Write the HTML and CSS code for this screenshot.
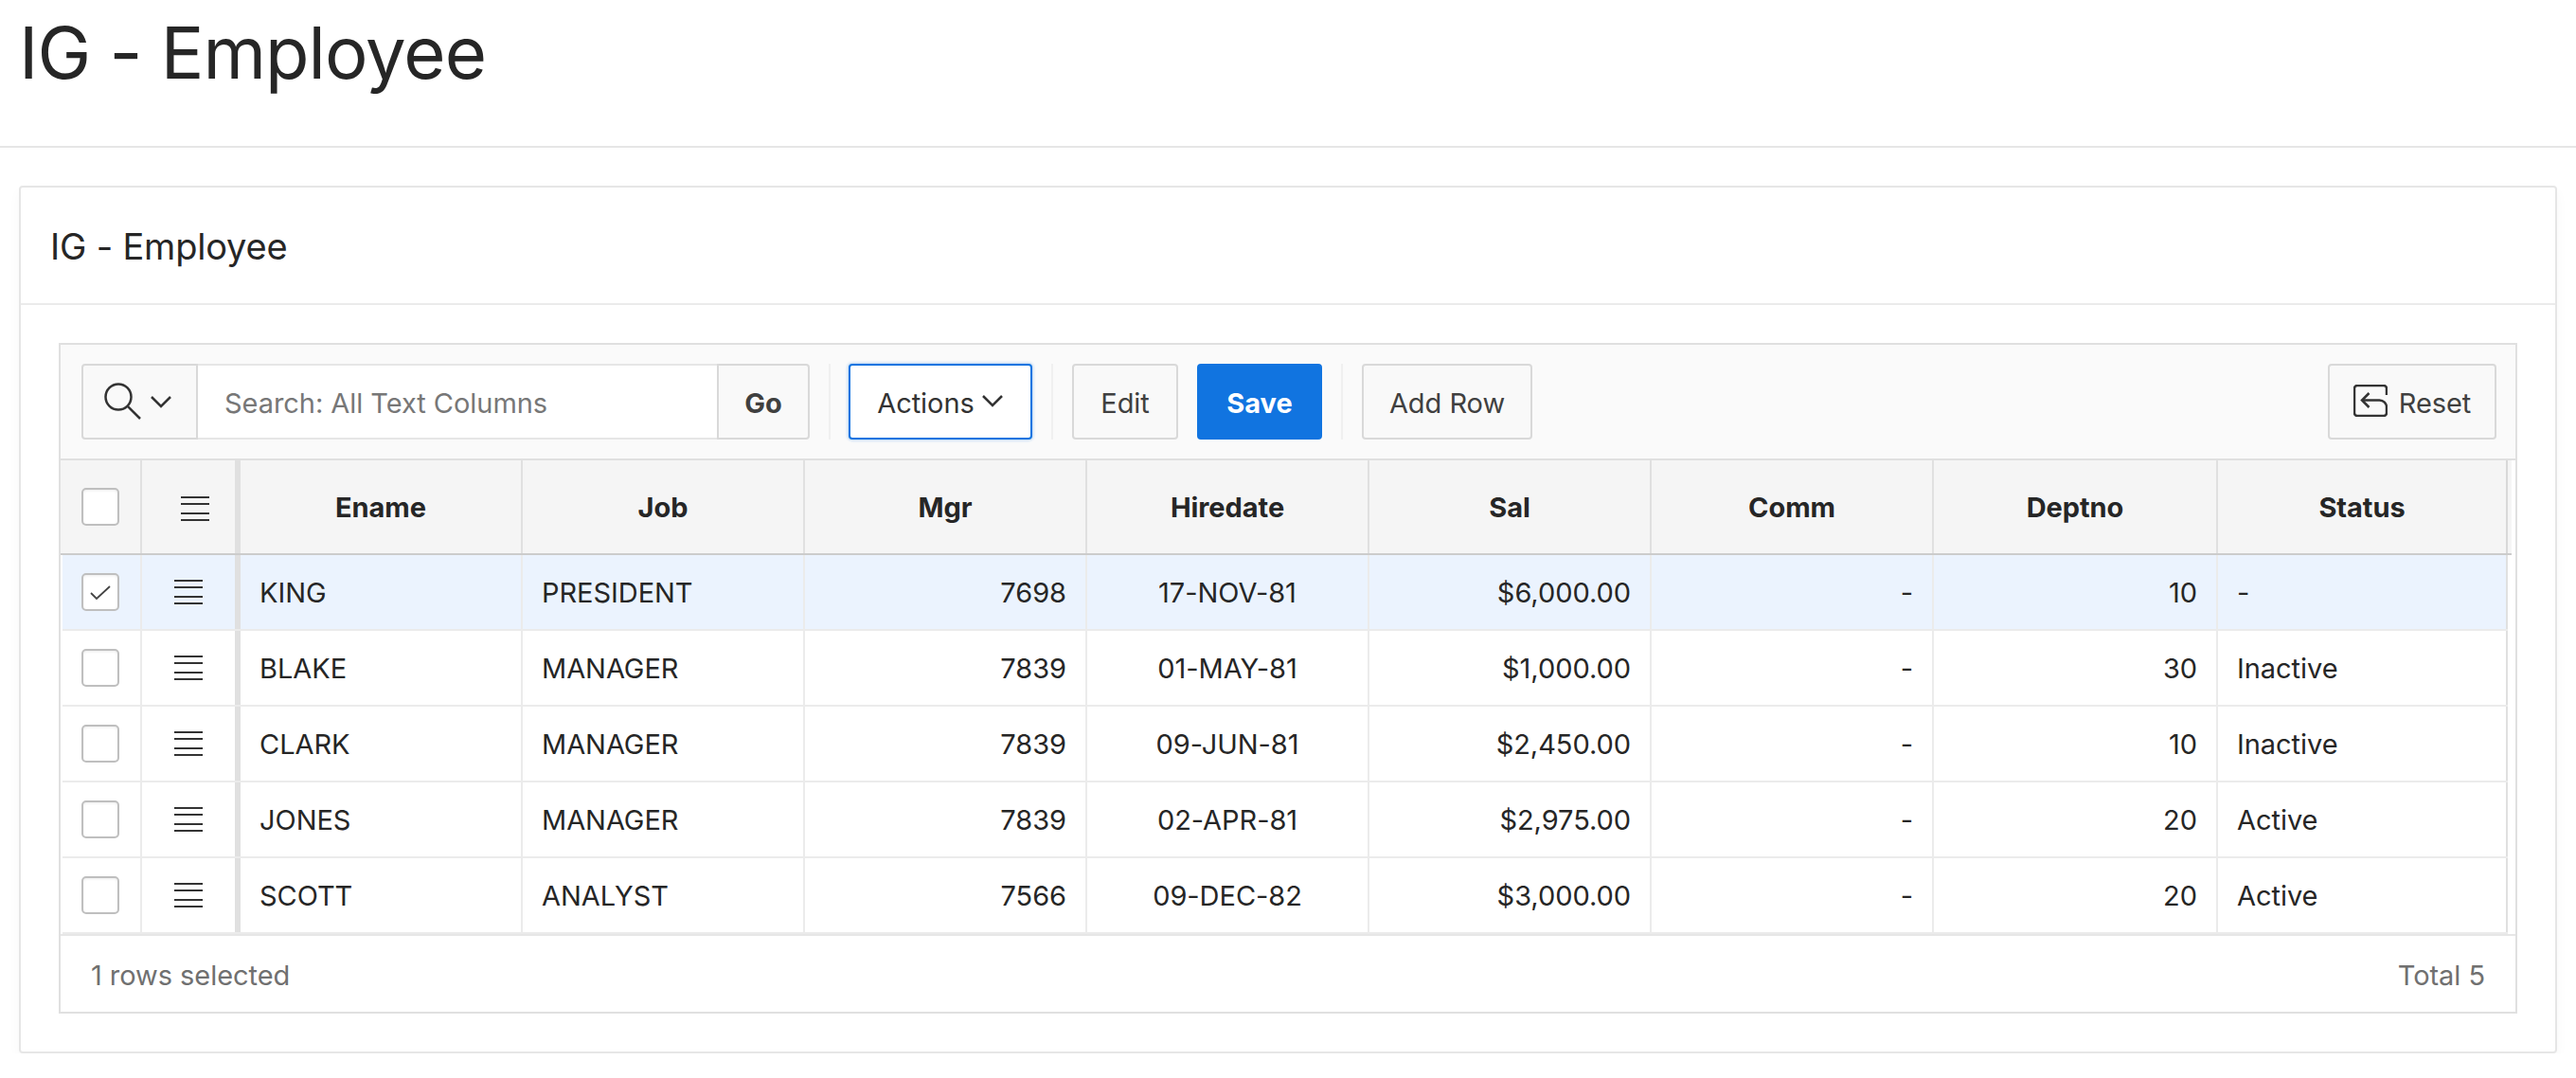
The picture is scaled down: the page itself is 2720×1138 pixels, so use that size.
FILE: index.html
```html
<!DOCTYPE html>
<html lang="en">
<head>
    <meta charset="UTF-8">
    <title>IG - Employee</title>
    <link rel="stylesheet" href="styles.css">
</head>
<body>
<div class="page-title"><h1>IG - Employee</h1></div>
<div class="content">
    <div class="card">
        <div class="card-head"><h2>IG - Employee</h2></div>
        <div class="card-body">
            <div class="ig">
                <div class="toolbar">
                    <div class="search">
                        <button class="btn btn-search">
                            <svg class="ico-search" width="40" height="40" viewBox="0 0 40 40"><circle cx="15" cy="15" r="13.5"/><path d="M24.8 24.8L38 38"/></svg>
                            <svg class="ico-chev" width="24" height="14" viewBox="0 0 24 14"><path d="M2 2l10 10L22 2"/></svg>
                        </button>
                        <input class="search-input" type="text" placeholder="Search: All Text Columns">
                        <button class="btn btn-go">Go</button>
                    </div>
                    <span class="sep"></span>
                    <button class="btn btn-actions">Actions<svg class="ico-chev" width="24" height="14" viewBox="0 0 24 14"><path d="M2 2l10 10L22 2"/></svg></button>
                    <span class="sep"></span>
                    <button class="btn btn-edit">Edit</button>
                    <button class="btn btn-save">Save</button>
                    <span class="sep"></span>
                    <button class="btn btn-add">Add Row</button>
                    <button class="btn btn-reset">
                        <svg class="ico-reset" width="36" height="34" viewBox="0 0 36 34"><path d="M35 11V4a3 3 0 0 0-3-3H4a3 3 0 0 0-3 3v26a3 3 0 0 0 3 3h28a3 3 0 0 0 3-3v-6a7.5 7.5 0 0 0-7.5-7.5H9.5"/><path d="M16.5 9L9 16.5 16.5 24"/></svg>
                        Reset
                    </button>
                </div>

                <div class="row row-head">
                    <div class="cell cell-check"><span class="cb"></span></div>
                    <div class="cell cell-menu"><span class="burger"></span></div>
                    <div class="cell">Ename</div>
                    <div class="cell">Job</div>
                    <div class="cell">Mgr</div>
                    <div class="cell">Hiredate</div>
                    <div class="cell">Sal</div>
                    <div class="cell">Comm</div>
                    <div class="cell">Deptno</div>
                    <div class="cell cell-last">Status</div>
                </div>

                <div class="row row-selected">
                    <div class="cell cell-check"><span class="cb"><svg width="24" height="17" viewBox="0 0 24 17"><path d="M2 9l6 6L22 2"/></svg></span></div>
                    <div class="cell cell-menu"><span class="burger"></span></div>
                    <div class="cell">KING</div>
                    <div class="cell">PRESIDENT</div>
                    <div class="cell right">7698</div>
                    <div class="cell center">17-NOV-81</div>
                    <div class="cell right">$6,000.00</div>
                    <div class="cell right">-</div>
                    <div class="cell right">10</div>
                    <div class="cell cell-last">-</div>
                </div>
                <div class="row">
                    <div class="cell cell-check"><span class="cb"></span></div>
                    <div class="cell cell-menu"><span class="burger"></span></div>
                    <div class="cell">BLAKE</div>
                    <div class="cell">MANAGER</div>
                    <div class="cell right">7839</div>
                    <div class="cell center">01-MAY-81</div>
                    <div class="cell right">$1,000.00</div>
                    <div class="cell right">-</div>
                    <div class="cell right">30</div>
                    <div class="cell cell-last">Inactive</div>
                </div>
                <div class="row">
                    <div class="cell cell-check"><span class="cb"></span></div>
                    <div class="cell cell-menu"><span class="burger"></span></div>
                    <div class="cell">CLARK</div>
                    <div class="cell">MANAGER</div>
                    <div class="cell right">7839</div>
                    <div class="cell center">09-JUN-81</div>
                    <div class="cell right">$2,450.00</div>
                    <div class="cell right">-</div>
                    <div class="cell right">10</div>
                    <div class="cell cell-last">Inactive</div>
                </div>
                <div class="row">
                    <div class="cell cell-check"><span class="cb"></span></div>
                    <div class="cell cell-menu"><span class="burger"></span></div>
                    <div class="cell">JONES</div>
                    <div class="cell">MANAGER</div>
                    <div class="cell right">7839</div>
                    <div class="cell center">02-APR-81</div>
                    <div class="cell right">$2,975.00</div>
                    <div class="cell right">-</div>
                    <div class="cell right">20</div>
                    <div class="cell cell-last">Active</div>
                </div>
                <div class="row">
                    <div class="cell cell-check"><span class="cb"></span></div>
                    <div class="cell cell-menu"><span class="burger"></span></div>
                    <div class="cell">SCOTT</div>
                    <div class="cell">ANALYST</div>
                    <div class="cell right">7566</div>
                    <div class="cell center">09-DEC-82</div>
                    <div class="cell right">$3,000.00</div>
                    <div class="cell right">-</div>
                    <div class="cell right">20</div>
                    <div class="cell cell-last">Active</div>
                </div>

                <div class="footer">
                    <span>1 rows selected</span>
                    <span>Total 5</span>
                </div>
            </div>
        </div>
    </div>
</div>
</body>
</html>
```

FILE: styles.css
```css
* {
    box-sizing: border-box;
}
body {
    margin: 0;
    background: #fff;
    color: #262626;
    font-family: Inter, "Noto Sans", sans-serif;
    font-size: 29px;
    letter-spacing: -0.05px;
}
.page-title {
    height: 156px;
    padding: 0 20px;
    border-bottom: 2px solid #e6e6e6;
}
.page-title h1 {
    margin: 0;
    padding-top: 12px;
    font-size: 76px;
    line-height: 86px;
    font-weight: 400;
    letter-spacing: -1px;
}
.content {
    padding: 40px 20px 0;
}
.card {
    border: 2px solid #e6e6e6;
    border-radius: 4px;
    box-shadow: 0 6px 14px rgba(0, 0, 0, 0.03);
}
.card-head {
    height: 124px;
    padding: 2px 31px 0;
    display: flex;
    align-items: center;
    border-bottom: 2px solid #ebebeb;
}
.card-head h2 {
    margin: 0;
    font-size: 38px;
    font-weight: 400;
    letter-spacing: -0.2px;
}
.card-body {
    padding: 40px;
}

.ig {
    border: 2px solid #e0e0e0;
}
.toolbar {
    height: 122px;
    padding: 20px 20px 20px 22px;
    display: flex;
    background: #fafafa;
    border-bottom: 2px solid #e0e0e0;
}
.btn {
    height: 80px;
    padding: 2px 0 0;
    display: flex;
    align-items: center;
    justify-content: center;
    border: 2px solid #d9d9d9;
    border-radius: 4px;
    background: #f9f9f9;
    color: #404040;
    font-family: inherit;
    font-size: 29px;
    letter-spacing: -0.05px;
}
.search {
    display: flex;
}
.btn-search {
    width: 123px;
    padding: 0 4px 0 0;
    border-radius: 4px 0 0 4px;
}
.search-input {
    width: 548px;
    height: 80px;
    padding: 2px 28px 0;
    border: 2px solid #e6e6e6;
    border-left: 0;
    border-right: 0;
    background: #fff;
    font-family: inherit;
    font-size: 29px;
    letter-spacing: -0.05px;
    outline: 0;
}
.search-input::placeholder {
    color: #777;
    opacity: 1;
}
.btn-go {
    width: 98px;
    border-radius: 0 4px 4px 0;
    font-weight: 700;
}
.sep {
    width: 2px;
    height: 80px;
    margin: 0 20px;
    background: #f0f0f0;
}
.btn-actions {
    width: 194px;
    margin-left: -1px;
    gap: 7px;
    background: #fff;
    border: 2px solid #1174e0;
    box-shadow: 0 0 3px 1px rgba(17, 116, 224, 0.3);
    color: #333;
}
.btn-actions .ico-chev {
    margin-top: -4px;
}
.btn-edit {
    width: 112px;
}
.btn-save {
    width: 132px;
    margin-left: 20px;
    background: #1174e0;
    border-color: #1174e0;
    color: #fff;
    font-weight: 700;
}
.btn-add {
    width: 180px;
}
.btn-reset {
    width: 178px;
    margin-left: auto;
    gap: 12px;
}
svg {
    display: block;
    fill: none;
    stroke: #333;
    stroke-width: 2.5;
}
.ico-search {
    margin-right: 8px;
}
.ico-reset {
    margin-top: -4px;
}

.row {
    display: grid;
    grid-template-columns: 84px 104px 298px 298px 298px 298px 298px 298px 300px 306px;
    height: 80px;
    margin-left: 2px;
    margin-right: 8px;
    border-bottom: 2px solid #ebebeb;
    background: #fff;
}
.row-head {
    grid-template-columns: 86px 104px 298px 298px 298px 298px 298px 298px 300px 306px;
    height: 100px;
    margin-left: 0;
    margin-right: 4px;
    border-bottom-color: #ccc;
    background: #f5f5f5;
    font-weight: 700;
}
.row-selected {
    background: #ebf3fe;
}
.cell {
    min-width: 0;
    padding: 0 20px;
    display: flex;
    align-items: center;
    border-right: 2px solid #ebebeb;
}
.row-head .cell {
    justify-content: center;
    border-right-color: #e0e0e0;
}
.right {
    justify-content: flex-end;
}
.center {
    justify-content: center;
}
.cell-check,
.cell-menu {
    padding: 0;
    justify-content: center;
}
.cell-check {
    padding-right: 2px;
}
.row-head .cell-check {
    padding-right: 0;
}
.cell-menu {
    border-right: 6px solid #e0e0e0;
}
.row-head .cell-menu {
    padding: 3px 0 0 13px;
}
.cell-last {
    border-right: 2px solid #e0e0e0;
}
.row-head .cell-last {
    border-right-color: #d8d8d8;
}
.cb {
    width: 40px;
    height: 40px;
    display: flex;
    align-items: center;
    justify-content: center;
    border: 2px solid #bfbfbf;
    border-radius: 5px;
    background: #fff;
    box-shadow: inset 0 1px 3px rgba(0, 0, 0, 0.08);
}
.cb svg {
    stroke: #444;
    stroke-width: 1.8;
}
.burger {
    width: 30px;
    height: 26px;
    border-top: 2px solid #333;
    border-bottom: 2px solid #333;
    background: linear-gradient(#333, #333) 0 5px / 100% 2px no-repeat,
                linear-gradient(#333, #333) 0 15px / 100% 2px no-repeat;
}
.footer {
    height: 82px;
    padding: 3px 32px 0;
    display: flex;
    align-items: center;
    justify-content: space-between;
    border-top: 2px solid #e6e6e6;
    color: #707070;
}
```
